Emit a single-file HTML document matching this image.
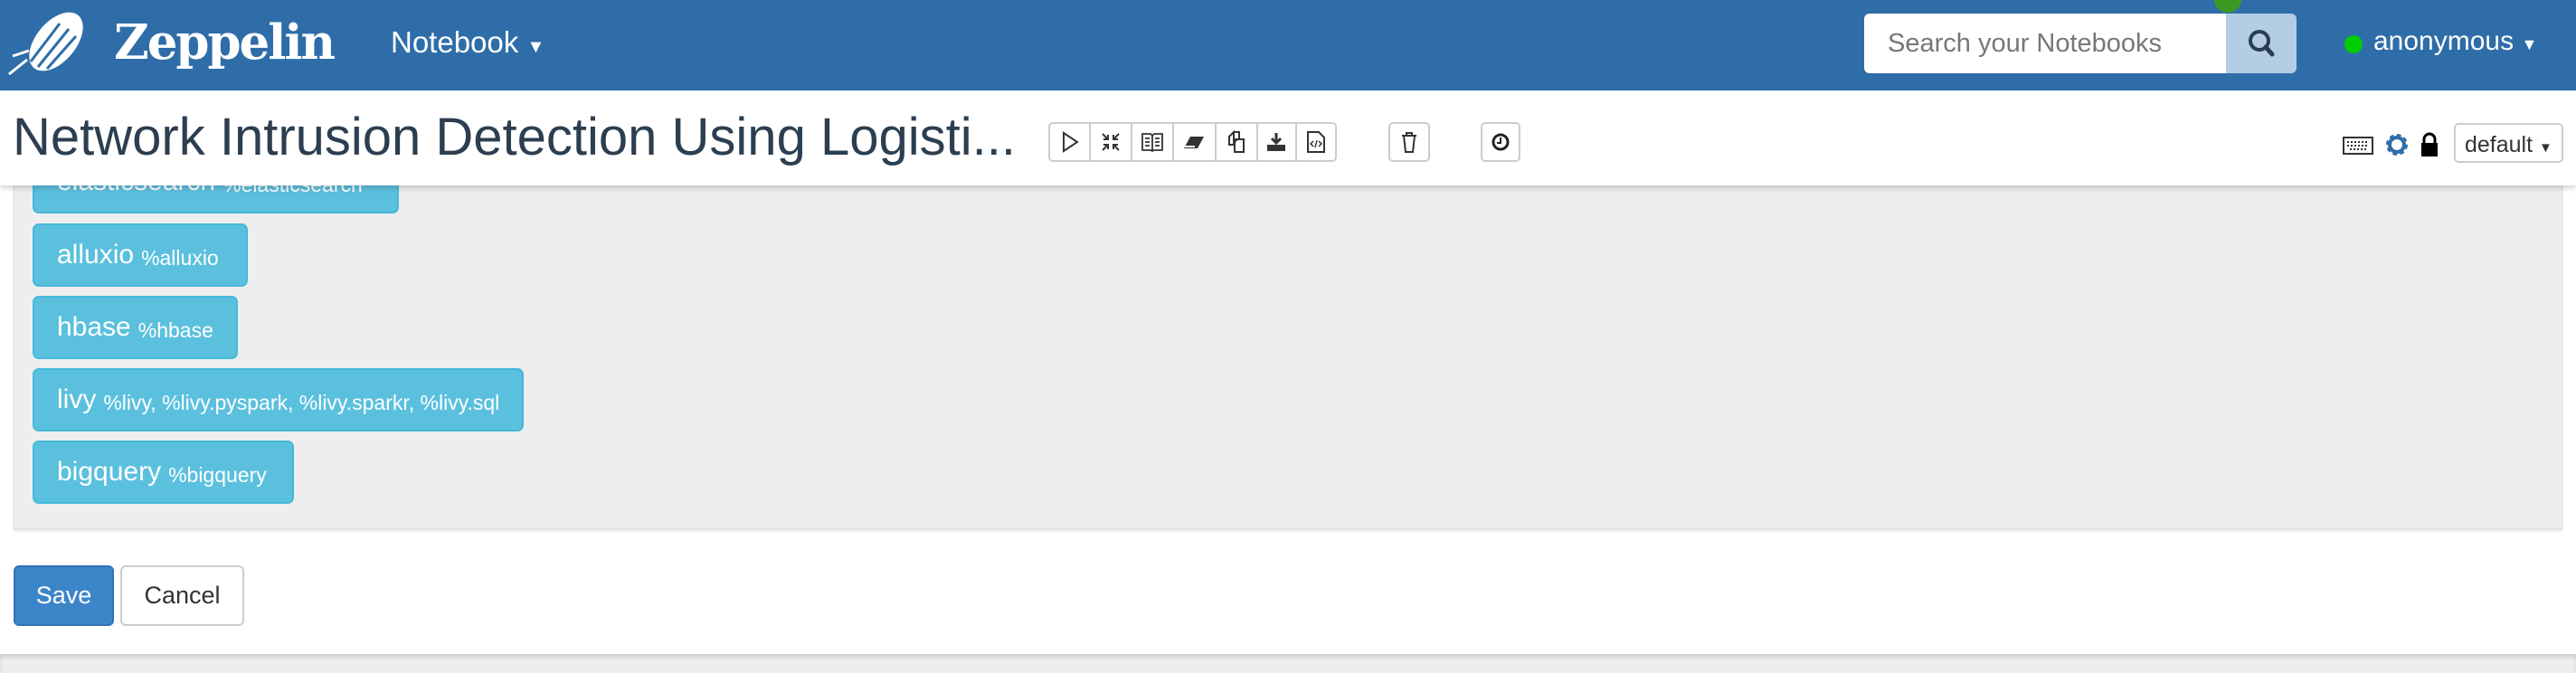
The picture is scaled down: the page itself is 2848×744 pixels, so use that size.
<!DOCTYPE html>
<html><head><meta charset="utf-8">
<style>
*{box-sizing:border-box;margin:0;padding:0}
body{width:2848px;height:744px;overflow:hidden;background:#fff;font-family:"Liberation Sans",sans-serif;position:relative}
.nav{position:absolute;left:0;top:0;width:2848px;height:100px;background:#2e6da8}
.abs{position:absolute}
.hdr{position:absolute;left:0;top:100px;width:2848px;height:105px;background:#fff;box-shadow:0 3px 6px rgba(0,0,0,.18);z-index:5}
.panel{position:absolute;left:15px;top:150px;width:2818px;height:435px;background:#eee;border:1px solid #ddd;box-shadow:0 2px 3px rgba(0,0,0,.12)}
.btn{position:absolute;left:36px;background:#5bc0de;border:2px solid #46b8da;border-radius:7px;color:#fff;font-size:30px;padding-left:25px;display:flex;align-items:center;height:70px}
.btn small{font-size:23px;margin-left:8px;position:relative;top:3px}
.tb{position:absolute;top:135px;height:44px;border:2px solid #ccc;border-radius:5px;background:#fff;display:flex}
.tb div{height:100%;border-right:2px solid #ccc;display:flex;align-items:center;justify-content:center}
.tb div:last-child{border-right:none}
</style></head><body>
<div class="nav">
  <svg class="abs" style="left:8px;top:12px" width="104" height="72" viewBox="0 0 104 72">
    <ellipse cx="54" cy="34" rx="22" ry="38" fill="#fff" transform="rotate(40 54 34)"/>
    <path d="M26 56 L58 14 M34 62 L68 20 M44 64 L76 28" stroke="#2e6da8" stroke-width="3"/>
    <path d="M2 70 L22 54 M6 50 L24 44" stroke="#fff" stroke-width="3"/>
  </svg>
  <div class="abs" style="left:126px;top:16px;color:#fff;font-family:'DejaVu Serif','Liberation Serif',serif;font-weight:bold;font-size:53px;letter-spacing:-2px">Zeppelin</div>
  <div class="abs" style="left:432px;top:28px;color:#fff;font-size:33px">Notebook <span style="font-size:20px">▼</span></div>
  <div class="abs" style="left:2448px;top:-14px;width:30px;height:28px;border-radius:50%;background:#3c9a24"></div>
  <div class="abs" style="left:2061px;top:15px;width:400px;height:66px;background:#fff;border-radius:6px 0 0 6px;color:#777;font-size:29px;padding:17px 0 0 26px">Search your Notebooks</div>
  <div class="abs" style="left:2461px;top:15px;width:78px;height:66px;background:#b3cde4;border-radius:0 6px 6px 0">
    <svg width="78" height="66"><circle cx="37" cy="30" r="10" fill="none" stroke="#2b3e50" stroke-width="4"/><path d="M44 37 L51 45" stroke="#2b3e50" stroke-width="5" stroke-linecap="round"/></svg>
  </div>
  <div class="abs" style="left:2592px;top:39px;width:20px;height:20px;border-radius:50%;background:#0c0"></div>
  <div class="abs" style="left:2624px;top:29px;color:#fff;font-size:30px">anonymous <span style="font-size:18px">▼</span></div>
</div>
<div class="hdr">
  <div class="abs" style="left:14px;top:18px;color:#2c3e50;font-size:58px">Network Intrusion Detection Using Logisti...</div>
</div>
<div class="tb" style="left:1159px;width:319px;z-index:6">
  <div style="width:46px"><svg width="20" height="24"><path d="M3 2 L18 12 L3 22Z" fill="none" stroke="#333" stroke-width="2"/></svg></div>
  <div style="width:46px"><svg width="24" height="24"><path d="M3 3l6 6M9 4v5H4M21 3l-6 6M15 4v5h5M3 21l6-6M4 15h5v5M21 21l-6-6M20 15h-5v5" stroke="#333" stroke-width="2" fill="none"/></svg></div>
  <div style="width:47px"><svg width="26" height="24"><path d="M2 3h9l2 2 2-2h9v18h-9l-2 1-2-1H2z M13 5v17 M5 8h5M5 12h5M5 16h5M16 8h5M16 12h5M16 16h5" stroke="#333" stroke-width="1.8" fill="none"/></svg></div>
  <div style="width:47px"><svg width="26" height="24"><path d="M9 6h15l-7 13H2z" fill="#333"/><path d="M3 17h11" stroke="#fff" stroke-width="2"/></svg></div>
  <div style="width:47px"><svg width="24" height="26"><path d="M9 2h6v8H9z M5 6l4-4v14H4V7z M13 10h7v14H10V13z" fill="none" stroke="#333" stroke-width="2"/></svg></div>
  <div style="width:43px"><svg width="24" height="24"><path d="M12 2v11M7 8l5 5 5-5" stroke="#333" stroke-width="3" fill="none"/><path d="M2 15h20v7H2z" fill="#333"/></svg></div>
  <div style="width:43px"><svg width="22" height="26"><path d="M2 2h12l6 6v16H2z" fill="none" stroke="#333" stroke-width="2"/><path d="M8 12l-3 3 3 3M14 12l3 3-3 3M12 11l-2 8" stroke="#333" stroke-width="1.5" fill="none"/></svg></div>
</div>
<div class="tb" style="left:1535px;width:46px;z-index:6"><div style="width:42px"><svg width="20" height="26"><path d="M2 6h16M7 6V3h6v3M4 6l2 18h8l2-18" fill="none" stroke="#333" stroke-width="2"/></svg></div></div>
<div class="tb" style="left:1637px;width:44px;z-index:6"><div style="width:40px"><svg width="22" height="22"><circle cx="11" cy="11" r="8" fill="none" stroke="#222" stroke-width="3"/><path d="M11 6v6H7" stroke="#222" stroke-width="2" fill="none"/></svg></div></div>
<svg class="abs" style="left:2590px;top:150px;z-index:6" width="34" height="22"><rect x="1" y="2" width="32" height="18" fill="#fff" stroke="#333" stroke-width="2"/><path d="M5 7h24M5 11h24M8 15h18" stroke="#333" stroke-width="2" stroke-dasharray="2 2"/></svg>
<svg class="abs" style="left:2636px;top:145px;z-index:6" width="28" height="30" viewBox="0 0 28 30"><circle cx="14" cy="15" r="9" fill="none" stroke="#2e6da8" stroke-width="6" stroke-dasharray="4 3"/><circle cx="14" cy="15" r="8" fill="none" stroke="#2e6da8" stroke-width="4"/></svg>
<svg class="abs" style="left:2675px;top:146px;z-index:6" width="22" height="28"><path d="M5 12V8a6 6 0 0 1 12 0v4" fill="none" stroke="#000" stroke-width="3"/><rect x="2" y="12" width="18" height="15" fill="#000"/></svg>
<div class="abs" style="left:2713px;top:136px;width:121px;height:44px;border:2px solid #ccc;border-radius:5px;font-size:25px;color:#333;padding:8px 0 0 10px;z-index:6;background:#fff">default <span style="font-size:15px">▼</span></div>
<div class="panel"></div>
<div class="btn" style="top:166px;width:405px">elasticsearch <small>%elasticsearch</small></div>
<div class="btn" style="top:247px;width:238px">alluxio <small>%alluxio</small></div>
<div class="btn" style="top:327px;width:227px">hbase <small>%hbase</small></div>
<div class="btn" style="top:407px;width:543px">livy <small>%livy, %livy.pyspark, %livy.sparkr, %livy.sql</small></div>
<div class="btn" style="top:487px;width:289px">bigquery <small>%bigquery</small></div>
<div class="abs" style="left:15px;top:625px;width:111px;height:67px;background:#3d85c9;border:2px solid #3072b5;border-radius:6px;color:#fff;font-size:27px;text-align:center;line-height:63px">Save</div>
<div class="abs" style="left:133px;top:625px;width:137px;height:67px;background:#fff;border:2px solid #ccc;border-radius:6px;color:#333;font-size:27px;text-align:center;line-height:63px">Cancel</div>
<div class="abs" style="left:0;top:723px;width:2848px;height:21px;background:#eee;box-shadow:inset 0 4px 5px rgba(0,0,0,.12)"></div>
</body></html>
